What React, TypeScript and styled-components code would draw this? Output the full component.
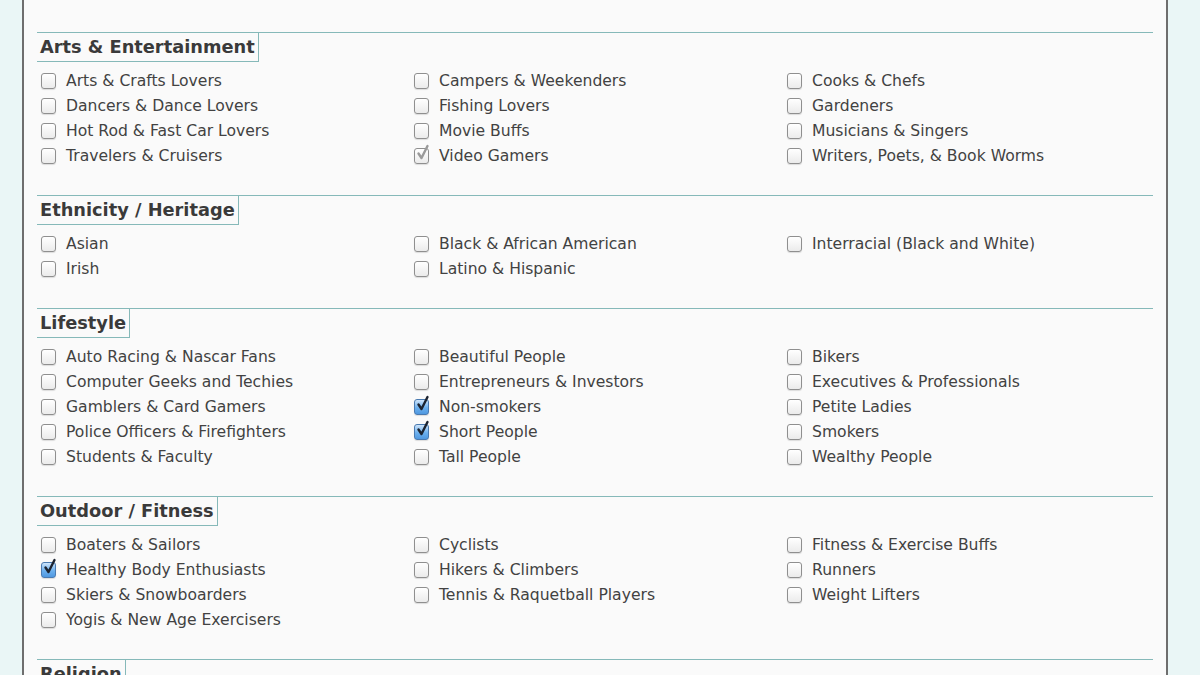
import React from "react";
import styled, { createGlobalStyle } from "styled-components";

const GlobalStyle = createGlobalStyle`
  html, body {
    margin: 0;
    padding: 0;
    background: #eaf6f6;
    font-family: "DejaVu Sans", Verdana, sans-serif;
    overflow: hidden;
  }
`;

type Mark = "none" | "checked" | "dimmed";

type Item = { label: string; mark?: Mark };

type Group = { title: string; columns: Item[][] };

const groups: Group[] = [
  {
    title: "Arts & Entertainment",
    columns: [
      [
        { label: "Arts & Crafts Lovers" },
        { label: "Dancers & Dance Lovers" },
        { label: "Hot Rod & Fast Car Lovers" },
        { label: "Travelers & Cruisers" },
      ],
      [
        { label: "Campers & Weekenders" },
        { label: "Fishing Lovers" },
        { label: "Movie Buffs" },
        { label: "Video Gamers", mark: "dimmed" },
      ],
      [
        { label: "Cooks & Chefs" },
        { label: "Gardeners" },
        { label: "Musicians & Singers" },
        { label: "Writers, Poets, & Book Worms" },
      ],
    ],
  },
  {
    title: "Ethnicity / Heritage",
    columns: [
      [{ label: "Asian" }, { label: "Irish" }],
      [{ label: "Black & African American" }, { label: "Latino & Hispanic" }],
      [{ label: "Interracial (Black and White)" }],
    ],
  },
  {
    title: "Lifestyle",
    columns: [
      [
        { label: "Auto Racing & Nascar Fans" },
        { label: "Computer Geeks and Techies" },
        { label: "Gamblers & Card Gamers" },
        { label: "Police Officers & Firefighters" },
        { label: "Students & Faculty" },
      ],
      [
        { label: "Beautiful People" },
        { label: "Entrepreneurs & Investors" },
        { label: "Non-smokers", mark: "checked" },
        { label: "Short People", mark: "checked" },
        { label: "Tall People" },
      ],
      [
        { label: "Bikers" },
        { label: "Executives & Professionals" },
        { label: "Petite Ladies" },
        { label: "Smokers" },
        { label: "Wealthy People" },
      ],
    ],
  },
  {
    title: "Outdoor / Fitness",
    columns: [
      [
        { label: "Boaters & Sailors" },
        { label: "Healthy Body Enthusiasts", mark: "checked" },
        { label: "Skiers & Snowboarders" },
        { label: "Yogis & New Age Exercisers" },
      ],
      [
        { label: "Cyclists" },
        { label: "Hikers & Climbers" },
        { label: "Tennis & Raquetball Players" },
      ],
      [
        { label: "Fitness & Exercise Buffs" },
        { label: "Runners" },
        { label: "Weight Lifters" },
      ],
    ],
  },
  {
    title: "Religion",
    columns: [[], [], []],
  },
];

const Page = styled.div`
  width: 1146px;
  margin-left: 22px;
  min-height: 675px;
  background: #fafafa;
  border-left: 2px solid #6e6e6e;
  border-right: 2px solid #6e6e6e;
  padding-top: 32px;
  box-sizing: border-box;
`;

const Section = styled.section`
  margin: 0 13px;
  border-top: 1px solid #86b9b9;
  padding-bottom: 27px;
`;

const Heading = styled.h3`
  display: inline-block;
  margin: 0;
  padding: 0 3px;
  height: 28px;
  line-height: 28px;
  border-right: 1px solid #86b9b9;
  border-bottom: 1px solid #86b9b9;
  font-size: 17.8px;
  font-weight: bold;
  color: #3a3a3a;
  vertical-align: top;
`;

const Columns = styled.div`
  display: grid;
  grid-template-columns: 373px 373px 1fr;
  margin-top: 6px;
`;

const Column = styled.div`
  display: flex;
  flex-direction: column;
`;

const Row = styled.label`
  display: flex;
  align-items: center;
  height: 25px;
  padding-left: 4px;
  gap: 10px;
  font-size: 15.6px;
  color: #424242;
`;

const Box = styled.span<{ $mark: Mark }>`
  position: relative;
  flex: none;
  width: 13px;
  height: 14px;
  border-radius: 3px;
  border: 1px solid ${(p) => (p.$mark === "checked" ? "#4a7ab0" : "#8f8f8f")};
  background: ${(p) =>
    p.$mark === "checked"
      ? "linear-gradient(#cfe5fb, #6cb0ee 55%, #4f98e0)"
      : "linear-gradient(#ffffff, #ebebeb)"};
  box-shadow: 0 1px 1px rgba(0, 0, 0, 0.12);
`;

const Tick = styled.svg<{ $dim: boolean }>`
  position: absolute;
  left: 1px;
  top: -5px;
  width: 14px;
  height: 17px;
  fill: none;
  stroke: ${(p) => (p.$dim ? "#9a9a9a" : "#1c2330")};
  stroke-width: 2.4;
  stroke-linecap: round;
  stroke-linejoin: round;
`;

const CheckBox = ({ mark }: { mark: Mark }) => (
  <Box $mark={mark}>
    {mark !== "none" && (
      <Tick $dim={mark === "dimmed"} viewBox="0 0 14 17">
        <path d="M2.5 9.5 L5.5 14 L11.5 2" />
      </Tick>
    )}
  </Box>
);

const App = () => {
  return (
    <>
      <GlobalStyle />
      <Page>
        {groups.map((group) => (
          <Section key={group.title}>
            <Heading>{group.title}</Heading>
            <Columns>
              {group.columns.map((column, i) => (
                <Column key={i}>
                  {column.map((item) => (
                    <Row key={item.label}>
                      <CheckBox mark={item.mark ?? "none"} />
                      {item.label}
                    </Row>
                  ))}
                </Column>
              ))}
            </Columns>
          </Section>
        ))}
      </Page>
    </>
  );
};

export default App;
